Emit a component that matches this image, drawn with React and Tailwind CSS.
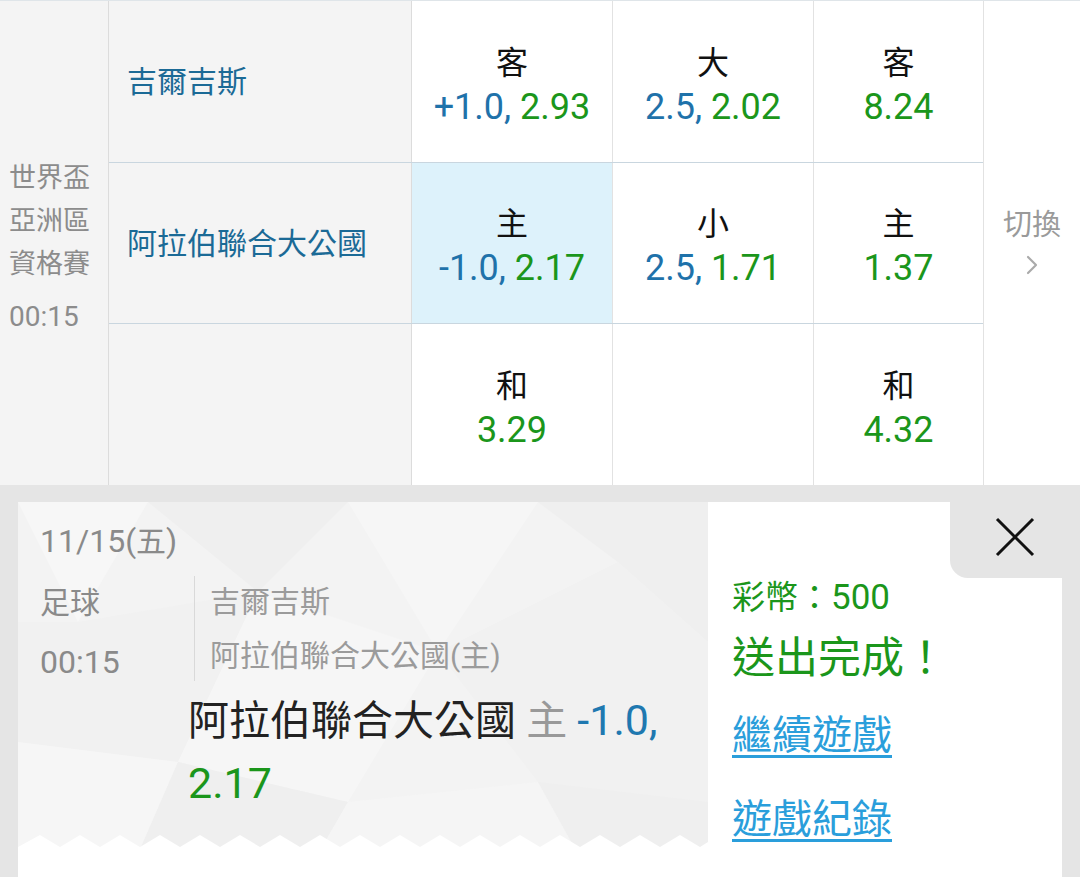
import { ChevronRight } from "lucide-react";

const font = "font-['Roboto','Noto_Sans_CJK_TC',sans-serif]";

const OddsCell = ({ label, line, odds, active, last, empty }) => (
  <div
    className={`flex flex-col items-center justify-center pt-[6px] ${last ? "w-[169px]" : "w-[201px] border-r border-[#e2e2e2]"} ${active ? "bg-[#ddf2fb]" : "bg-white"}`}
  >
    {!empty && (
      <>
        <div className="text-[32px] leading-[44px] text-[#111]">{label}</div>
        <div className="text-[36px] leading-[44px]">
          {line && <span className="text-[#1f72aa]">{line}, </span>}
          <span className="text-[#1b961b]">{odds}</span>
        </div>
      </>
    )}
  </div>
);

const Row = ({ team, cells, h, border = true }) => (
  <div className={`flex ${h} ${border ? "border-b border-[#c9d6df]" : ""}`}>
    <div className="w-[303px] border-r border-[#dcdcdc] bg-[#f4f4f4] flex items-center pl-[18px] text-[30px] text-[#1b6a96]">
      {team}
    </div>
    {cells.map((c, i) => (
      <OddsCell key={i} {...c} last={i === 2} />
    ))}
  </div>
);

const Pattern = () => (
  <svg className="absolute left-0 top-0 w-full h-[352px]" viewBox="0 0 690 352" preserveAspectRatio="none">
    <rect width="690" height="352" fill="#f3f3f3" />
    <polygon points="0,0 130,0 60,120" fill="#f7f7f7" />
    <polygon points="130,0 330,0 240,90" fill="#efefef" />
    <polygon points="330,0 520,0 420,150" fill="#f6f6f6" />
    <polygon points="520,0 690,0 690,140 600,60" fill="#efefef" />
    <polygon points="0,120 60,120 240,90 160,260 0,240" fill="#f1f1f1" />
    <polygon points="240,90 420,150 330,300 160,260" fill="#f6f6f6" />
    <polygon points="420,150 600,60 690,140 690,300 520,280" fill="#f1f1f1" />
    <polygon points="0,240 160,260 120,352 0,352" fill="#f6f6f6" />
    <polygon points="160,260 330,300 300,352 120,352" fill="#efefef" />
    <polygon points="330,300 520,280 560,352 300,352" fill="#f5f5f5" />
    <polygon points="520,280 690,300 690,352 560,352" fill="#efefef" />
    <path
      d="M0,352 L0,345 L22,333 L42,345 L62,333 L82,345 L102,333 L122,345 L142,333 L162,345 L182,333 L202,345 L222,333 L242,345 L262,333 L282,345 L302,333 L322,345 L342,333 L362,345 L382,333 L402,345 L422,333 L442,345 L462,333 L482,345 L502,333 L522,345 L542,333 L562,345 L582,333 L602,345 L622,333 L642,345 L662,333 L682,345 L690,340 L690,352 Z"
      fill="#ffffff"
    />
  </svg>
);

export default function App() {
  return (
    <div className={`${font} w-[1080px] h-[877px] overflow-hidden bg-[#e5e5e5]`}>
      {/* odds table */}
      <div className="flex h-[485px] border-t border-[#dfe5e9] bg-white">
        <div className="w-[109px] border-r border-[#dcdcdc] bg-[#f4f4f4] flex flex-col justify-center pl-[9px] pt-[8px] text-[27px] text-[#8c8c8c]">
          <div className="leading-[43px]">世界盃</div>
          <div className="leading-[43px]">亞洲區</div>
          <div className="leading-[43px]">資格賽</div>
          <div className="leading-[43px] mt-[9px] text-[28px]">00:15</div>
        </div>
        <div className="flex flex-col">
          <Row
            h="h-[162px]"
            team="吉爾吉斯"
            cells={[
              { label: "客", line: "+1.0", odds: "2.93" },
              { label: "大", line: "2.5", odds: "2.02" },
              { label: "客", odds: "8.24" },
            ]}
          />
          <Row
            h="h-[161px]"
            team="阿拉伯聯合大公國"
            cells={[
              { label: "主", line: "-1.0", odds: "2.17", active: true },
              { label: "小", line: "2.5", odds: "1.71" },
              { label: "主", odds: "1.37" },
            ]}
          />
          <Row
            h="h-[161px]"
            border={false}
            team=""
            cells={[{ label: "和", odds: "3.29" }, { empty: true }, { label: "和", odds: "4.32" }]}
          />
        </div>
        <div className="flex-1 border-l border-[#e2e2e2] flex flex-col items-center justify-center text-[#9a9a9a]">
          <div className="text-[29px] leading-[40px]">切換</div>
          <ChevronRight className="w-[32px] h-[32px] mt-[4px] text-[#aaa]" strokeWidth={1.6} />
        </div>
      </div>

      {/* bet result card */}
      <div className="pt-[17px] px-[18px]">
        <div className="flex h-[380px] bg-white">
          <div className="relative w-[690px]">
            <Pattern />
            <div className="relative pt-[19px] pl-[22px]">
              <div className="text-[30px] leading-[40px] text-[#8a8a8a]">
                <span className="text-[32px]">11/15(</span>五<span className="text-[32px]">)</span>
              </div>
              <div className="flex mt-[14px]">
                <div className="w-[154px] text-[30px] text-[#8a8a8a]">
                  <div className="h-[52px] flex items-center">足球</div>
                  <div className="h-[68px] flex items-center text-[32px]">00:15</div>
                </div>
                <div className="w-px h-[105px] bg-[#d9d9d9]"></div>
                <div className="pl-[15px] text-[30px] text-[#9b9b9b]">
                  <div className="h-[50px] flex items-center">吉爾吉斯</div>
                  <div className="h-[58px] flex items-center">阿拉伯聯合大公國(主)</div>
                </div>
              </div>
              <div className="ml-[148px] mt-[-7px] w-[520px] text-[41px] leading-[62px] text-[#222]">
                阿拉伯聯合大公國 <span className="text-[#999]">主</span>{" "}
                <span className="text-[43px] text-[#1f78b0]">-1.0,</span>{" "}
                <span className="text-[43px] text-[#1b961b]">2.17</span>
              </div>
            </div>
          </div>
          <div className="flex-1 flex flex-col">
            <div className="flex">
              <div className="flex-1"></div>
              <div className="w-[112px] h-[76px] bg-[#e5e5e5] rounded-bl-[18px] flex items-center justify-center pl-[18px] pb-[6px]">
                <svg width="40" height="40" viewBox="0 0 40 40">
                  <path d="M2 2 L38 38 M38 2 L2 38" stroke="#111" strokeWidth="3" fill="none" />
                </svg>
              </div>
            </div>
            <div className="pl-[24px] text-[#1b961b]">
              <div className="h-[40px] flex items-center text-[33px]">
                彩幣：<span className="text-[35px]">500</span>
              </div>
              <div className="mt-[12px] h-[56px] flex items-center text-[43px]">送出完成！</div>
              <div className="mt-[22px] h-[56px] flex items-center text-[40px] text-[#2a9edb] underline decoration-[3px] underline-offset-[6px]">
                繼續遊戲
              </div>
              <div className="mt-[28px] h-[56px] flex items-center text-[40px] text-[#2a9edb] underline decoration-[3px] underline-offset-[6px]">
                遊戲紀錄
              </div>
            </div>
          </div>
        </div>
      </div>
    </div>
  );
}
